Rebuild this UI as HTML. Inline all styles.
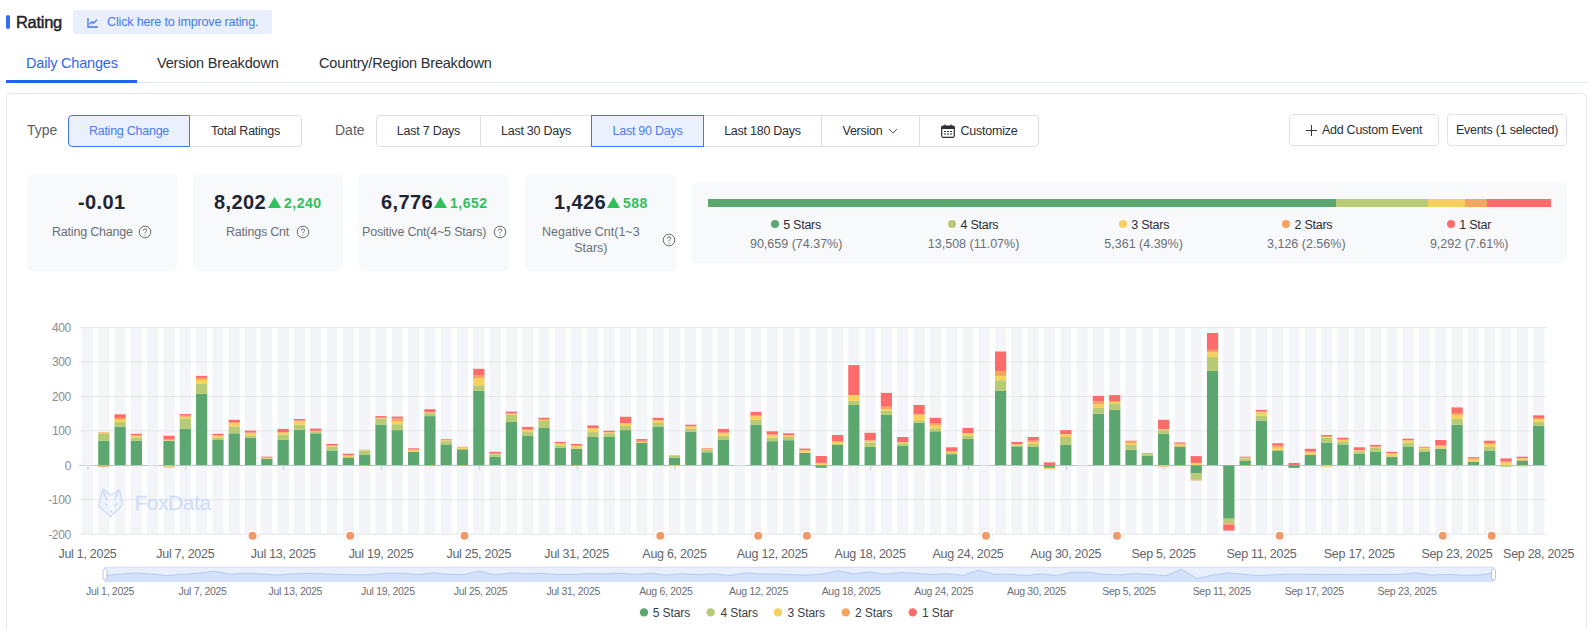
<!DOCTYPE html>
<html><head><meta charset="utf-8">
<style>
*{box-sizing:border-box;margin:0;padding:0}
html,body{width:1590px;height:629px;overflow:hidden;background:#fff;font-family:"Liberation Sans",sans-serif;color:#333}
.a{position:absolute;white-space:nowrap}
.btn{position:absolute;border:1px solid #dcdfe6;background:#fff;font-size:12.5px;letter-spacing:-0.25px;color:#2b2f36;display:flex;align-items:center;justify-content:center}
.hi{position:absolute}
.card{position:absolute;background:#f8f9fb;border-radius:4px}
.yl{letter-spacing:-0.3px;font-size:12px;fill:#8a8d93;font-family:"Liberation Sans",sans-serif}
.xl{letter-spacing:-0.28px;font-size:12.5px;fill:#62656b;font-family:"Liberation Sans",sans-serif}
.sl{letter-spacing:-0.3px;font-size:10.5px;fill:#6b6e74;font-family:"Liberation Sans",sans-serif}
.lg{letter-spacing:-0.1px;font-size:12px;fill:#3b3e44;font-family:"Liberation Sans",sans-serif}
</style></head><body>
<div class="a" style="left:6px;top:15px;width:4px;height:14px;border-radius:2px;background:#2f6df3"></div>
<div class="a" style="left:16px;top:12px;font-size:16.5px;font-weight:normal;-webkit-text-stroke:0.45px #1f2329;color:#1f2329;line-height:20px;letter-spacing:-0.3px">Rating</div>
<div class="a" style="left:73px;top:10px;width:199px;height:24px;background:#e9effd;border-radius:2px"></div>
<svg class="a" style="left:87px;top:17px" width="12" height="11" viewBox="0 0 12 11"><path d="M1 1 V10 H11" fill="none" stroke="#3f74ef" stroke-width="1.3"/><path d="M2.7 7.3 L5 4.9 L6.6 6.2 L10 2.7" fill="none" stroke="#3f74ef" stroke-width="1.3"/></svg>
<div class="a" style="left:107px;top:14px;font-size:12.5px;color:#4677ee;line-height:16px;letter-spacing:-0.15px">Click here to improve rating.</div>
<div class="a" style="left:26px;top:54px;font-size:14.5px;color:#2e67ef;line-height:18px;letter-spacing:-0.2px">Daily Changes</div>
<div class="a" style="left:157px;top:54px;font-size:14.5px;color:#2b2f36;line-height:18px;letter-spacing:-0.2px">Version Breakdown</div>
<div class="a" style="left:319px;top:54px;font-size:14.5px;color:#2b2f36;line-height:18px;letter-spacing:-0.2px">Country/Region Breakdown</div>
<div class="a" style="left:6px;top:82px;width:1582px;height:1px;background:#e3e9f3"></div>
<div class="a" style="left:6px;top:80px;width:131px;height:2.5px;background:#1f63f0"></div>
<div class="a" style="left:6px;top:93px;width:1581px;height:600px;border:1px solid #e6e7ea;border-radius:5px"></div>
<div class="a" style="left:27px;top:122px;font-size:14px;color:#5b5f66;line-height:16px">Type</div>
<div class="btn" style="left:189px;top:115px;width:113px;height:32px;border-radius:0 4px 4px 0">Total Ratings</div>
<div class="btn" style="left:68px;top:115px;width:122px;height:32px;border-radius:4px 0 0 4px;border-color:#3b78f2;background:#eaf1fd;color:#4a7cf0">Rating Change</div>
<div class="a" style="left:335px;top:122px;font-size:14px;color:#5b5f66;line-height:16px">Date</div>
<div class="btn" style="left:376px;top:115px;width:105px;height:32px;border-radius:4px 0 0 4px">Last 7 Days</div>
<div class="btn" style="left:480px;top:115px;width:112px;height:32px">Last 30 Days</div>
<div class="btn" style="left:703px;top:115px;width:119px;height:32px">Last 180 Days</div>
<div class="btn" style="left:821px;top:115px;width:99px;height:32px">Version <svg width="10" height="6" viewBox="0 0 10 6" style="margin-left:6px"><path d="M1 1 L5 5 L9 1" fill="none" stroke="#555" stroke-width="1"/></svg></div>
<div class="btn" style="left:919px;top:115px;width:120px;height:32px;border-radius:0 4px 4px 0"><svg width="14" height="14" viewBox="0 0 14 14" style="margin-right:6px"><rect x="0.7" y="2" width="12.6" height="11.3" rx="1.5" fill="none" stroke="#2b2f36" stroke-width="1.2"/><rect x="0.7" y="2" width="12.6" height="3" fill="#2b2f36"/><path d="M4 0.5 V3 M10 0.5 V3" stroke="#2b2f36" stroke-width="1.2"/><path d="M3 7.5 H5 M6 7.5 H8 M9 7.5 H11 M3 10 H5 M6 10 H8 M9 10 H11" stroke="#2b2f36" stroke-width="1.1"/></svg>Customize</div>
<div class="btn" style="left:591px;top:115px;width:113px;height:32px;border-color:#3b78f2;background:#eaf1fd;color:#4a7cf0">Last 90 Days</div>
<div class="btn" style="left:1289px;top:114px;width:150px;height:32px;border-radius:4px;border-color:#e0e2e7"><svg width="11" height="11" viewBox="0 0 11 11" style="margin-right:5px;position:relative;top:0.5px"><path d="M5.5 0 V11 M0 5.5 H11" stroke="#33363c" stroke-width="1"/></svg>Add Custom Event</div>
<div class="btn" style="left:1447px;top:114px;width:120px;height:32px;border-radius:4px;border-color:#e0e2e7">Events (1 selected)</div>

<div class="card" style="left:27px;top:175px;width:150px;height:96px"></div>
<div class="card" style="left:193px;top:175px;width:150px;height:96px"></div>
<div class="card" style="left:359px;top:175px;width:150px;height:96px"></div>
<div class="card" style="left:525px;top:175px;width:151px;height:96px"></div>
<div class="card" style="left:692px;top:183px;width:875px;height:80px"></div>

<div class="a" style="left:78px;top:190px;font-size:20px;font-weight:bold;color:#1f2533;line-height:24px;letter-spacing:0.4px">-0.01</div>
<div class="a" style="left:52px;top:225px;font-size:12.5px;color:#6b6f76;line-height:15px;letter-spacing:-0.2px">Rating Change</div>
<svg class="hi" style="left:138.2px;top:224.9px" width="14" height="14" viewBox="0 0 14 14"><circle cx="7" cy="7" r="5.8" fill="none" stroke="#6b6f76" stroke-width="1"/><path d="M5.3 5.6 Q5.3 3.9 7 3.9 Q8.7 3.9 8.7 5.4 Q8.7 6.3 7.6 6.9 Q7 7.2 7 8.2" fill="none" stroke="#6b6f76" stroke-width="1"/><circle cx="7" cy="10" r="0.6" fill="#6b6f76"/></svg>
<div class="a" style="left:214px;top:190px;font-size:20px;font-weight:bold;color:#1f2533;line-height:24px;letter-spacing:0.4px">8,202</div>
<svg class="a" style="left:268px;top:197px" width="13" height="11" viewBox="0 0 13 11"><path d="M6.5 0 L13 11 H0 Z" fill="#30c25a"/></svg>
<div class="a" style="left:284px;top:194px;font-size:14px;font-weight:bold;color:#30c25a;line-height:18px;letter-spacing:0.5px">2,240</div>
<div class="a" style="left:226px;top:225px;font-size:12.5px;color:#6b6f76;line-height:15px;letter-spacing:-0.2px">Ratings Cnt</div>
<svg class="hi" style="left:295.7px;top:224.9px" width="14" height="14" viewBox="0 0 14 14"><circle cx="7" cy="7" r="5.8" fill="none" stroke="#6b6f76" stroke-width="1"/><path d="M5.3 5.6 Q5.3 3.9 7 3.9 Q8.7 3.9 8.7 5.4 Q8.7 6.3 7.6 6.9 Q7 7.2 7 8.2" fill="none" stroke="#6b6f76" stroke-width="1"/><circle cx="7" cy="10" r="0.6" fill="#6b6f76"/></svg>
<div class="a" style="left:381px;top:190px;font-size:20px;font-weight:bold;color:#1f2533;line-height:24px;letter-spacing:0.4px">6,776</div>
<svg class="a" style="left:434px;top:197px" width="13" height="11" viewBox="0 0 13 11"><path d="M6.5 0 L13 11 H0 Z" fill="#30c25a"/></svg>
<div class="a" style="left:450px;top:194px;font-size:14px;font-weight:bold;color:#30c25a;line-height:18px;letter-spacing:0.5px">1,652</div>
<div class="a" style="left:362px;top:225px;font-size:12.5px;color:#6b6f76;line-height:15px;letter-spacing:-0.2px">Positive Cnt(4~5 Stars)</div>
<svg class="hi" style="left:492.5px;top:224.9px" width="14" height="14" viewBox="0 0 14 14"><circle cx="7" cy="7" r="5.8" fill="none" stroke="#6b6f76" stroke-width="1"/><path d="M5.3 5.6 Q5.3 3.9 7 3.9 Q8.7 3.9 8.7 5.4 Q8.7 6.3 7.6 6.9 Q7 7.2 7 8.2" fill="none" stroke="#6b6f76" stroke-width="1"/><circle cx="7" cy="10" r="0.6" fill="#6b6f76"/></svg>
<div class="a" style="left:554px;top:190px;font-size:20px;font-weight:bold;color:#1f2533;line-height:24px;letter-spacing:0.4px">1,426</div>
<svg class="a" style="left:607px;top:197px" width="13" height="11" viewBox="0 0 13 11"><path d="M6.5 0 L13 11 H0 Z" fill="#30c25a"/></svg>
<div class="a" style="left:623px;top:194px;font-size:14px;font-weight:bold;color:#30c25a;line-height:18px;letter-spacing:0.5px">588</div>
<div class="a" style="left:542px;top:225px;font-size:12.5px;color:#6b6f76;line-height:15.8px;text-align:center">Negative Cnt(1~3<br>Stars)</div>
<svg class="hi" style="left:661.9px;top:232.9px" width="14" height="14" viewBox="0 0 14 14"><circle cx="7" cy="7" r="5.8" fill="none" stroke="#6b6f76" stroke-width="1"/><path d="M5.3 5.6 Q5.3 3.9 7 3.9 Q8.7 3.9 8.7 5.4 Q8.7 6.3 7.6 6.9 Q7 7.2 7 8.2" fill="none" stroke="#6b6f76" stroke-width="1"/><circle cx="7" cy="10" r="0.6" fill="#6b6f76"/></svg>

<div class="a" style="left:708px;top:199px;width:627.5px;height:8px;background:#5ba76f"></div>
<div class="a" style="left:1335.5px;top:199px;width:92.6px;height:8px;background:#b6cb73"></div>
<div class="a" style="left:1428.1px;top:199px;width:37.2px;height:8px;background:#f8d05c"></div>
<div class="a" style="left:1465.3px;top:199px;width:21.8px;height:8px;background:#f6a55f"></div>
<div class="a" style="left:1487.1px;top:199px;width:64.1px;height:8px;background:#fd6b6b"></div>
<div class="a" style="left:770.7px;top:220px;width:8px;height:8px;border-radius:50%;background:#5ba76f"></div>
<div class="a" style="left:783.2px;top:217.5px;font-size:12.5px;color:#2b2f36;line-height:15px;letter-spacing:-0.25px">5 Stars</div>
<div class="a" style="left:736.2px;width:120px;text-align:center;top:237px;font-size:12.5px;color:#6b6f76;line-height:15px">90,659 (74.37%)</div>
<div class="a" style="left:948.0px;top:220px;width:8px;height:8px;border-radius:50%;background:#b6cb73"></div>
<div class="a" style="left:960.5px;top:217.5px;font-size:12.5px;color:#2b2f36;line-height:15px;letter-spacing:-0.25px">4 Stars</div>
<div class="a" style="left:913.6px;width:120px;text-align:center;top:237px;font-size:12.5px;color:#6b6f76;line-height:15px">13,508 (11.07%)</div>
<div class="a" style="left:1118.8px;top:220px;width:8px;height:8px;border-radius:50%;background:#f8d05c"></div>
<div class="a" style="left:1131.3px;top:217.5px;font-size:12.5px;color:#2b2f36;line-height:15px;letter-spacing:-0.25px">3 Stars</div>
<div class="a" style="left:1083.6px;width:120px;text-align:center;top:237px;font-size:12.5px;color:#6b6f76;line-height:15px">5,361 (4.39%)</div>
<div class="a" style="left:1282.0px;top:220px;width:8px;height:8px;border-radius:50%;background:#f6a55f"></div>
<div class="a" style="left:1294.5px;top:217.5px;font-size:12.5px;color:#2b2f36;line-height:15px;letter-spacing:-0.25px">2 Stars</div>
<div class="a" style="left:1246.3px;width:120px;text-align:center;top:237px;font-size:12.5px;color:#6b6f76;line-height:15px">3,126 (2.56%)</div>
<div class="a" style="left:1446.8px;top:220px;width:8px;height:8px;border-radius:50%;background:#fd6b6b"></div>
<div class="a" style="left:1459.3px;top:217.5px;font-size:12.5px;color:#2b2f36;line-height:15px;letter-spacing:-0.25px">1 Star</div>
<div class="a" style="left:1409.2px;width:120px;text-align:center;top:237px;font-size:12.5px;color:#6b6f76;line-height:15px">9,292 (7.61%)</div>

<svg class="a" style="left:0;top:0" width="1590" height="629" viewBox="0 0 1590 629">
<defs><filter id="sh" x="-50%" y="-50%" width="200%" height="200%"><feDropShadow dx="0" dy="0" stdDeviation="1" flood-color="#000" flood-opacity="0.15"/></filter></defs>
<line x1="79.3" y1="465.5" x2="1546.8" y2="465.5" stroke="#b6bfcb" stroke-width="1"/>
<rect x="81.90" y="327.5" width="11.2" height="206.7" fill="#edeef3" fill-opacity="0.6"/>
<rect x="98.21" y="327.5" width="11.2" height="206.7" fill="#edeef3" fill-opacity="0.6"/>
<rect x="114.51" y="327.5" width="11.2" height="206.7" fill="#edeef3" fill-opacity="0.6"/>
<rect x="130.81" y="327.5" width="11.2" height="206.7" fill="#edeef3" fill-opacity="0.6"/>
<rect x="147.12" y="327.5" width="11.2" height="206.7" fill="#edeef3" fill-opacity="0.6"/>
<rect x="163.43" y="327.5" width="11.2" height="206.7" fill="#edeef3" fill-opacity="0.6"/>
<rect x="179.73" y="327.5" width="11.2" height="206.7" fill="#edeef3" fill-opacity="0.6"/>
<rect x="196.03" y="327.5" width="11.2" height="206.7" fill="#edeef3" fill-opacity="0.6"/>
<rect x="212.34" y="327.5" width="11.2" height="206.7" fill="#edeef3" fill-opacity="0.6"/>
<rect x="228.65" y="327.5" width="11.2" height="206.7" fill="#edeef3" fill-opacity="0.6"/>
<rect x="244.95" y="327.5" width="11.2" height="206.7" fill="#edeef3" fill-opacity="0.6"/>
<rect x="261.25" y="327.5" width="11.2" height="206.7" fill="#edeef3" fill-opacity="0.6"/>
<rect x="277.56" y="327.5" width="11.2" height="206.7" fill="#edeef3" fill-opacity="0.6"/>
<rect x="293.87" y="327.5" width="11.2" height="206.7" fill="#edeef3" fill-opacity="0.6"/>
<rect x="310.17" y="327.5" width="11.2" height="206.7" fill="#edeef3" fill-opacity="0.6"/>
<rect x="326.47" y="327.5" width="11.2" height="206.7" fill="#edeef3" fill-opacity="0.6"/>
<rect x="342.78" y="327.5" width="11.2" height="206.7" fill="#edeef3" fill-opacity="0.6"/>
<rect x="359.08" y="327.5" width="11.2" height="206.7" fill="#edeef3" fill-opacity="0.6"/>
<rect x="375.39" y="327.5" width="11.2" height="206.7" fill="#edeef3" fill-opacity="0.6"/>
<rect x="391.69" y="327.5" width="11.2" height="206.7" fill="#edeef3" fill-opacity="0.6"/>
<rect x="408.00" y="327.5" width="11.2" height="206.7" fill="#edeef3" fill-opacity="0.6"/>
<rect x="424.30" y="327.5" width="11.2" height="206.7" fill="#edeef3" fill-opacity="0.6"/>
<rect x="440.61" y="327.5" width="11.2" height="206.7" fill="#edeef3" fill-opacity="0.6"/>
<rect x="456.91" y="327.5" width="11.2" height="206.7" fill="#edeef3" fill-opacity="0.6"/>
<rect x="473.22" y="327.5" width="11.2" height="206.7" fill="#edeef3" fill-opacity="0.6"/>
<rect x="489.52" y="327.5" width="11.2" height="206.7" fill="#edeef3" fill-opacity="0.6"/>
<rect x="505.83" y="327.5" width="11.2" height="206.7" fill="#edeef3" fill-opacity="0.6"/>
<rect x="522.13" y="327.5" width="11.2" height="206.7" fill="#edeef3" fill-opacity="0.6"/>
<rect x="538.44" y="327.5" width="11.2" height="206.7" fill="#edeef3" fill-opacity="0.6"/>
<rect x="554.75" y="327.5" width="11.2" height="206.7" fill="#edeef3" fill-opacity="0.6"/>
<rect x="571.05" y="327.5" width="11.2" height="206.7" fill="#edeef3" fill-opacity="0.6"/>
<rect x="587.35" y="327.5" width="11.2" height="206.7" fill="#edeef3" fill-opacity="0.6"/>
<rect x="603.66" y="327.5" width="11.2" height="206.7" fill="#edeef3" fill-opacity="0.6"/>
<rect x="619.96" y="327.5" width="11.2" height="206.7" fill="#edeef3" fill-opacity="0.6"/>
<rect x="636.27" y="327.5" width="11.2" height="206.7" fill="#edeef3" fill-opacity="0.6"/>
<rect x="652.57" y="327.5" width="11.2" height="206.7" fill="#edeef3" fill-opacity="0.6"/>
<rect x="668.88" y="327.5" width="11.2" height="206.7" fill="#edeef3" fill-opacity="0.6"/>
<rect x="685.18" y="327.5" width="11.2" height="206.7" fill="#edeef3" fill-opacity="0.6"/>
<rect x="701.49" y="327.5" width="11.2" height="206.7" fill="#edeef3" fill-opacity="0.6"/>
<rect x="717.79" y="327.5" width="11.2" height="206.7" fill="#edeef3" fill-opacity="0.6"/>
<rect x="734.10" y="327.5" width="11.2" height="206.7" fill="#edeef3" fill-opacity="0.6"/>
<rect x="750.40" y="327.5" width="11.2" height="206.7" fill="#edeef3" fill-opacity="0.6"/>
<rect x="766.71" y="327.5" width="11.2" height="206.7" fill="#edeef3" fill-opacity="0.6"/>
<rect x="783.01" y="327.5" width="11.2" height="206.7" fill="#edeef3" fill-opacity="0.6"/>
<rect x="799.32" y="327.5" width="11.2" height="206.7" fill="#edeef3" fill-opacity="0.6"/>
<rect x="815.62" y="327.5" width="11.2" height="206.7" fill="#edeef3" fill-opacity="0.6"/>
<rect x="831.93" y="327.5" width="11.2" height="206.7" fill="#edeef3" fill-opacity="0.6"/>
<rect x="848.24" y="327.5" width="11.2" height="206.7" fill="#edeef3" fill-opacity="0.6"/>
<rect x="864.54" y="327.5" width="11.2" height="206.7" fill="#edeef3" fill-opacity="0.6"/>
<rect x="880.84" y="327.5" width="11.2" height="206.7" fill="#edeef3" fill-opacity="0.6"/>
<rect x="897.15" y="327.5" width="11.2" height="206.7" fill="#edeef3" fill-opacity="0.6"/>
<rect x="913.45" y="327.5" width="11.2" height="206.7" fill="#edeef3" fill-opacity="0.6"/>
<rect x="929.76" y="327.5" width="11.2" height="206.7" fill="#edeef3" fill-opacity="0.6"/>
<rect x="946.06" y="327.5" width="11.2" height="206.7" fill="#edeef3" fill-opacity="0.6"/>
<rect x="962.37" y="327.5" width="11.2" height="206.7" fill="#edeef3" fill-opacity="0.6"/>
<rect x="978.67" y="327.5" width="11.2" height="206.7" fill="#edeef3" fill-opacity="0.6"/>
<rect x="994.98" y="327.5" width="11.2" height="206.7" fill="#edeef3" fill-opacity="0.6"/>
<rect x="1011.28" y="327.5" width="11.2" height="206.7" fill="#edeef3" fill-opacity="0.6"/>
<rect x="1027.59" y="327.5" width="11.2" height="206.7" fill="#edeef3" fill-opacity="0.6"/>
<rect x="1043.89" y="327.5" width="11.2" height="206.7" fill="#edeef3" fill-opacity="0.6"/>
<rect x="1060.20" y="327.5" width="11.2" height="206.7" fill="#edeef3" fill-opacity="0.6"/>
<rect x="1076.51" y="327.5" width="11.2" height="206.7" fill="#edeef3" fill-opacity="0.6"/>
<rect x="1092.81" y="327.5" width="11.2" height="206.7" fill="#edeef3" fill-opacity="0.6"/>
<rect x="1109.12" y="327.5" width="11.2" height="206.7" fill="#edeef3" fill-opacity="0.6"/>
<rect x="1125.42" y="327.5" width="11.2" height="206.7" fill="#edeef3" fill-opacity="0.6"/>
<rect x="1141.73" y="327.5" width="11.2" height="206.7" fill="#edeef3" fill-opacity="0.6"/>
<rect x="1158.03" y="327.5" width="11.2" height="206.7" fill="#edeef3" fill-opacity="0.6"/>
<rect x="1174.34" y="327.5" width="11.2" height="206.7" fill="#edeef3" fill-opacity="0.6"/>
<rect x="1190.64" y="327.5" width="11.2" height="206.7" fill="#edeef3" fill-opacity="0.6"/>
<rect x="1206.95" y="327.5" width="11.2" height="206.7" fill="#edeef3" fill-opacity="0.6"/>
<rect x="1223.25" y="327.5" width="11.2" height="206.7" fill="#edeef3" fill-opacity="0.6"/>
<rect x="1239.56" y="327.5" width="11.2" height="206.7" fill="#edeef3" fill-opacity="0.6"/>
<rect x="1255.86" y="327.5" width="11.2" height="206.7" fill="#edeef3" fill-opacity="0.6"/>
<rect x="1272.16" y="327.5" width="11.2" height="206.7" fill="#edeef3" fill-opacity="0.6"/>
<rect x="1288.47" y="327.5" width="11.2" height="206.7" fill="#edeef3" fill-opacity="0.6"/>
<rect x="1304.78" y="327.5" width="11.2" height="206.7" fill="#edeef3" fill-opacity="0.6"/>
<rect x="1321.08" y="327.5" width="11.2" height="206.7" fill="#edeef3" fill-opacity="0.6"/>
<rect x="1337.38" y="327.5" width="11.2" height="206.7" fill="#edeef3" fill-opacity="0.6"/>
<rect x="1353.69" y="327.5" width="11.2" height="206.7" fill="#edeef3" fill-opacity="0.6"/>
<rect x="1370.00" y="327.5" width="11.2" height="206.7" fill="#edeef3" fill-opacity="0.6"/>
<rect x="1386.30" y="327.5" width="11.2" height="206.7" fill="#edeef3" fill-opacity="0.6"/>
<rect x="1402.61" y="327.5" width="11.2" height="206.7" fill="#edeef3" fill-opacity="0.6"/>
<rect x="1418.91" y="327.5" width="11.2" height="206.7" fill="#edeef3" fill-opacity="0.6"/>
<rect x="1435.22" y="327.5" width="11.2" height="206.7" fill="#edeef3" fill-opacity="0.6"/>
<rect x="1451.52" y="327.5" width="11.2" height="206.7" fill="#edeef3" fill-opacity="0.6"/>
<rect x="1467.83" y="327.5" width="11.2" height="206.7" fill="#edeef3" fill-opacity="0.6"/>
<rect x="1484.13" y="327.5" width="11.2" height="206.7" fill="#edeef3" fill-opacity="0.6"/>
<rect x="1500.44" y="327.5" width="11.2" height="206.7" fill="#edeef3" fill-opacity="0.6"/>
<rect x="1516.74" y="327.5" width="11.2" height="206.7" fill="#edeef3" fill-opacity="0.6"/>
<rect x="1533.05" y="327.5" width="11.2" height="206.7" fill="#edeef3" fill-opacity="0.6"/>
<line x1="79.3" y1="327.5" x2="1546.8" y2="327.5" stroke="#e5e7eb" stroke-width="1"/>
<line x1="79.3" y1="362.0" x2="1546.8" y2="362.0" stroke="#e5e7eb" stroke-width="1"/>
<line x1="79.3" y1="396.5" x2="1546.8" y2="396.5" stroke="#e5e7eb" stroke-width="1"/>
<line x1="79.3" y1="430.9" x2="1546.8" y2="430.9" stroke="#e5e7eb" stroke-width="1"/>
<line x1="79.3" y1="499.7" x2="1546.8" y2="499.7" stroke="#e5e7eb" stroke-width="1"/>
<line x1="79.3" y1="534.2" x2="1546.8" y2="534.2" stroke="#e5e7eb" stroke-width="1"/>
<rect x="98.21" y="440.70" width="11.2" height="24.60" fill="#5ba76f"/>
<rect x="98.21" y="433.30" width="11.2" height="7.40" fill="#b6cb73"/>
<rect x="98.21" y="432.50" width="11.2" height="0.80" fill="#f8d05c"/>
<rect x="98.21" y="432.00" width="11.2" height="0.50" fill="#f6a55f"/>
<rect x="98.21" y="465.30" width="11.2" height="1.50" fill="#f6a55f"/>
<rect x="114.51" y="426.60" width="11.2" height="38.70" fill="#5ba76f"/>
<rect x="114.51" y="421.70" width="11.2" height="4.90" fill="#b6cb73"/>
<rect x="114.51" y="419.80" width="11.2" height="1.90" fill="#f8d05c"/>
<rect x="114.51" y="418.00" width="11.2" height="1.80" fill="#f6a55f"/>
<rect x="114.51" y="414.30" width="11.2" height="3.70" fill="#fd6b6b"/>
<rect x="130.81" y="440.70" width="11.2" height="24.60" fill="#5ba76f"/>
<rect x="130.81" y="437.70" width="11.2" height="3.00" fill="#b6cb73"/>
<rect x="130.81" y="435.80" width="11.2" height="1.90" fill="#f8d05c"/>
<rect x="130.81" y="435.00" width="11.2" height="0.80" fill="#f6a55f"/>
<rect x="130.81" y="433.80" width="11.2" height="1.20" fill="#fd6b6b"/>
<rect x="163.43" y="440.70" width="11.2" height="24.60" fill="#5ba76f"/>
<rect x="163.43" y="440.00" width="11.2" height="0.70" fill="#f8d05c"/>
<rect x="163.43" y="439.00" width="11.2" height="1.00" fill="#f6a55f"/>
<rect x="163.43" y="435.80" width="11.2" height="3.20" fill="#fd6b6b"/>
<rect x="163.43" y="465.30" width="11.2" height="1.20" fill="#b6cb73"/>
<rect x="163.43" y="466.50" width="11.2" height="1.30" fill="#f8d05c"/>
<rect x="179.73" y="428.60" width="11.2" height="36.70" fill="#5ba76f"/>
<rect x="179.73" y="418.50" width="11.2" height="10.10" fill="#b6cb73"/>
<rect x="179.73" y="416.80" width="11.2" height="1.70" fill="#f8d05c"/>
<rect x="179.73" y="415.60" width="11.2" height="1.20" fill="#f6a55f"/>
<rect x="179.73" y="414.10" width="11.2" height="1.50" fill="#fd6b6b"/>
<rect x="196.03" y="393.90" width="11.2" height="71.40" fill="#5ba76f"/>
<rect x="196.03" y="383.50" width="11.2" height="10.40" fill="#b6cb73"/>
<rect x="196.03" y="379.90" width="11.2" height="3.60" fill="#f8d05c"/>
<rect x="196.03" y="377.90" width="11.2" height="2.00" fill="#f6a55f"/>
<rect x="196.03" y="375.90" width="11.2" height="2.00" fill="#fd6b6b"/>
<rect x="212.34" y="440.00" width="11.2" height="25.30" fill="#5ba76f"/>
<rect x="212.34" y="437.70" width="11.2" height="2.30" fill="#b6cb73"/>
<rect x="212.34" y="435.80" width="11.2" height="1.90" fill="#f8d05c"/>
<rect x="212.34" y="435.00" width="11.2" height="0.80" fill="#f6a55f"/>
<rect x="212.34" y="433.80" width="11.2" height="1.20" fill="#fd6b6b"/>
<rect x="228.65" y="433.30" width="11.2" height="32.00" fill="#5ba76f"/>
<rect x="228.65" y="426.60" width="11.2" height="6.70" fill="#b6cb73"/>
<rect x="228.65" y="423.40" width="11.2" height="3.20" fill="#f8d05c"/>
<rect x="228.65" y="422.00" width="11.2" height="1.40" fill="#f6a55f"/>
<rect x="228.65" y="419.80" width="11.2" height="2.20" fill="#fd6b6b"/>
<rect x="244.95" y="437.70" width="11.2" height="27.60" fill="#5ba76f"/>
<rect x="244.95" y="435.80" width="11.2" height="1.90" fill="#b6cb73"/>
<rect x="244.95" y="433.30" width="11.2" height="2.50" fill="#f8d05c"/>
<rect x="244.95" y="432.50" width="11.2" height="0.80" fill="#f6a55f"/>
<rect x="244.95" y="430.60" width="11.2" height="1.90" fill="#fd6b6b"/>
<rect x="261.25" y="458.70" width="11.2" height="6.60" fill="#5ba76f"/>
<rect x="261.25" y="458.00" width="11.2" height="0.70" fill="#f8d05c"/>
<rect x="261.25" y="457.50" width="11.2" height="0.50" fill="#f6a55f"/>
<rect x="261.25" y="456.70" width="11.2" height="0.80" fill="#fd6b6b"/>
<rect x="277.56" y="440.00" width="11.2" height="25.30" fill="#5ba76f"/>
<rect x="277.56" y="434.50" width="11.2" height="5.50" fill="#b6cb73"/>
<rect x="277.56" y="432.80" width="11.2" height="1.70" fill="#f8d05c"/>
<rect x="277.56" y="432.00" width="11.2" height="0.80" fill="#f6a55f"/>
<rect x="277.56" y="428.90" width="11.2" height="3.10" fill="#fd6b6b"/>
<rect x="293.87" y="429.60" width="11.2" height="35.70" fill="#5ba76f"/>
<rect x="293.87" y="424.70" width="11.2" height="4.90" fill="#b6cb73"/>
<rect x="293.87" y="421.00" width="11.2" height="3.70" fill="#f8d05c"/>
<rect x="293.87" y="420.50" width="11.2" height="0.50" fill="#f6a55f"/>
<rect x="293.87" y="419.00" width="11.2" height="1.50" fill="#fd6b6b"/>
<rect x="310.17" y="433.30" width="11.2" height="32.00" fill="#5ba76f"/>
<rect x="310.17" y="432.10" width="11.2" height="1.20" fill="#b6cb73"/>
<rect x="310.17" y="431.50" width="11.2" height="0.60" fill="#f8d05c"/>
<rect x="310.17" y="430.80" width="11.2" height="0.70" fill="#f6a55f"/>
<rect x="310.17" y="428.60" width="11.2" height="2.20" fill="#fd6b6b"/>
<rect x="326.47" y="450.50" width="11.2" height="14.80" fill="#5ba76f"/>
<rect x="326.47" y="446.80" width="11.2" height="3.70" fill="#b6cb73"/>
<rect x="326.47" y="446.00" width="11.2" height="0.80" fill="#f8d05c"/>
<rect x="326.47" y="445.50" width="11.2" height="0.50" fill="#f6a55f"/>
<rect x="326.47" y="443.90" width="11.2" height="1.60" fill="#fd6b6b"/>
<rect x="342.78" y="457.40" width="11.2" height="7.90" fill="#5ba76f"/>
<rect x="342.78" y="455.50" width="11.2" height="1.90" fill="#f8d05c"/>
<rect x="342.78" y="455.00" width="11.2" height="0.50" fill="#f6a55f"/>
<rect x="342.78" y="453.70" width="11.2" height="1.30" fill="#fd6b6b"/>
<rect x="359.08" y="454.50" width="11.2" height="10.80" fill="#5ba76f"/>
<rect x="359.08" y="450.50" width="11.2" height="4.00" fill="#b6cb73"/>
<rect x="359.08" y="450.00" width="11.2" height="0.50" fill="#f8d05c"/>
<rect x="359.08" y="449.80" width="11.2" height="0.20" fill="#fd6b6b"/>
<rect x="359.08" y="465.30" width="11.2" height="0.70" fill="#f6a55f"/>
<rect x="375.39" y="424.70" width="11.2" height="40.60" fill="#5ba76f"/>
<rect x="375.39" y="418.50" width="11.2" height="6.20" fill="#b6cb73"/>
<rect x="375.39" y="418.00" width="11.2" height="0.50" fill="#f8d05c"/>
<rect x="375.39" y="417.80" width="11.2" height="0.20" fill="#f6a55f"/>
<rect x="375.39" y="416.10" width="11.2" height="1.70" fill="#fd6b6b"/>
<rect x="391.69" y="430.10" width="11.2" height="35.20" fill="#5ba76f"/>
<rect x="391.69" y="424.20" width="11.2" height="5.90" fill="#b6cb73"/>
<rect x="391.69" y="421.50" width="11.2" height="2.70" fill="#f8d05c"/>
<rect x="391.69" y="418.50" width="11.2" height="3.00" fill="#f6a55f"/>
<rect x="391.69" y="416.60" width="11.2" height="1.90" fill="#fd6b6b"/>
<rect x="408.00" y="451.80" width="11.2" height="13.50" fill="#5ba76f"/>
<rect x="408.00" y="450.00" width="11.2" height="1.80" fill="#f8d05c"/>
<rect x="408.00" y="449.50" width="11.2" height="0.50" fill="#f6a55f"/>
<rect x="408.00" y="448.30" width="11.2" height="1.20" fill="#fd6b6b"/>
<rect x="424.30" y="416.10" width="11.2" height="49.20" fill="#5ba76f"/>
<rect x="424.30" y="413.10" width="11.2" height="3.00" fill="#b6cb73"/>
<rect x="424.30" y="412.50" width="11.2" height="0.60" fill="#f8d05c"/>
<rect x="424.30" y="412.00" width="11.2" height="0.50" fill="#f6a55f"/>
<rect x="424.30" y="409.20" width="11.2" height="2.80" fill="#fd6b6b"/>
<rect x="424.30" y="465.30" width="11.2" height="0.70" fill="#f6a55f"/>
<rect x="440.61" y="444.40" width="11.2" height="20.90" fill="#5ba76f"/>
<rect x="440.61" y="441.20" width="11.2" height="3.20" fill="#b6cb73"/>
<rect x="440.61" y="440.50" width="11.2" height="0.70" fill="#f8d05c"/>
<rect x="440.61" y="439.50" width="11.2" height="1.00" fill="#f6a55f"/>
<rect x="440.61" y="439.00" width="11.2" height="0.50" fill="#fd6b6b"/>
<rect x="456.91" y="449.30" width="11.2" height="16.00" fill="#5ba76f"/>
<rect x="456.91" y="447.60" width="11.2" height="1.70" fill="#f8d05c"/>
<rect x="456.91" y="446.80" width="11.2" height="0.80" fill="#f6a55f"/>
<rect x="456.91" y="465.30" width="11.2" height="0.70" fill="#f6a55f"/>
<rect x="473.22" y="390.90" width="11.2" height="74.40" fill="#5ba76f"/>
<rect x="473.22" y="385.30" width="11.2" height="5.60" fill="#b6cb73"/>
<rect x="473.22" y="378.40" width="11.2" height="6.90" fill="#f8d05c"/>
<rect x="473.22" y="375.40" width="11.2" height="3.00" fill="#f6a55f"/>
<rect x="473.22" y="368.80" width="11.2" height="6.60" fill="#fd6b6b"/>
<rect x="489.52" y="456.70" width="11.2" height="8.60" fill="#5ba76f"/>
<rect x="489.52" y="454.20" width="11.2" height="2.50" fill="#b6cb73"/>
<rect x="489.52" y="454.00" width="11.2" height="0.20" fill="#f8d05c"/>
<rect x="489.52" y="453.50" width="11.2" height="0.50" fill="#f6a55f"/>
<rect x="489.52" y="451.80" width="11.2" height="1.70" fill="#fd6b6b"/>
<rect x="505.83" y="421.70" width="11.2" height="43.60" fill="#5ba76f"/>
<rect x="505.83" y="414.80" width="11.2" height="6.90" fill="#b6cb73"/>
<rect x="505.83" y="414.00" width="11.2" height="0.80" fill="#f8d05c"/>
<rect x="505.83" y="413.50" width="11.2" height="0.50" fill="#f6a55f"/>
<rect x="505.83" y="411.60" width="11.2" height="1.90" fill="#fd6b6b"/>
<rect x="522.13" y="435.80" width="11.2" height="29.50" fill="#5ba76f"/>
<rect x="522.13" y="432.10" width="11.2" height="3.70" fill="#b6cb73"/>
<rect x="522.13" y="430.30" width="11.2" height="1.80" fill="#f8d05c"/>
<rect x="522.13" y="429.50" width="11.2" height="0.80" fill="#f6a55f"/>
<rect x="522.13" y="426.90" width="11.2" height="2.60" fill="#fd6b6b"/>
<rect x="538.44" y="427.60" width="11.2" height="37.70" fill="#5ba76f"/>
<rect x="538.44" y="421.00" width="11.2" height="6.60" fill="#b6cb73"/>
<rect x="538.44" y="420.00" width="11.2" height="1.00" fill="#f8d05c"/>
<rect x="538.44" y="419.50" width="11.2" height="0.50" fill="#f6a55f"/>
<rect x="538.44" y="417.80" width="11.2" height="1.70" fill="#fd6b6b"/>
<rect x="554.75" y="447.60" width="11.2" height="17.70" fill="#5ba76f"/>
<rect x="554.75" y="446.00" width="11.2" height="1.60" fill="#b6cb73"/>
<rect x="554.75" y="443.60" width="11.2" height="2.40" fill="#f8d05c"/>
<rect x="554.75" y="443.00" width="11.2" height="0.60" fill="#f6a55f"/>
<rect x="554.75" y="441.90" width="11.2" height="1.10" fill="#fd6b6b"/>
<rect x="571.05" y="448.60" width="11.2" height="16.70" fill="#5ba76f"/>
<rect x="571.05" y="446.10" width="11.2" height="2.50" fill="#f8d05c"/>
<rect x="571.05" y="445.00" width="11.2" height="1.10" fill="#f6a55f"/>
<rect x="571.05" y="443.90" width="11.2" height="1.10" fill="#fd6b6b"/>
<rect x="571.05" y="465.30" width="11.2" height="0.70" fill="#f6a55f"/>
<rect x="587.35" y="437.00" width="11.2" height="28.30" fill="#5ba76f"/>
<rect x="587.35" y="432.10" width="11.2" height="4.90" fill="#b6cb73"/>
<rect x="587.35" y="428.40" width="11.2" height="3.70" fill="#f8d05c"/>
<rect x="587.35" y="428.00" width="11.2" height="0.40" fill="#f6a55f"/>
<rect x="587.35" y="425.40" width="11.2" height="2.60" fill="#fd6b6b"/>
<rect x="603.66" y="437.00" width="11.2" height="28.30" fill="#5ba76f"/>
<rect x="603.66" y="433.30" width="11.2" height="3.70" fill="#b6cb73"/>
<rect x="603.66" y="432.50" width="11.2" height="0.80" fill="#f8d05c"/>
<rect x="603.66" y="432.00" width="11.2" height="0.50" fill="#f6a55f"/>
<rect x="603.66" y="430.80" width="11.2" height="1.20" fill="#fd6b6b"/>
<rect x="619.96" y="430.10" width="11.2" height="35.20" fill="#5ba76f"/>
<rect x="619.96" y="425.90" width="11.2" height="4.20" fill="#b6cb73"/>
<rect x="619.96" y="423.40" width="11.2" height="2.50" fill="#f8d05c"/>
<rect x="619.96" y="423.00" width="11.2" height="0.40" fill="#f6a55f"/>
<rect x="619.96" y="416.80" width="11.2" height="6.20" fill="#fd6b6b"/>
<rect x="636.27" y="442.70" width="11.2" height="22.60" fill="#5ba76f"/>
<rect x="636.27" y="442.00" width="11.2" height="0.70" fill="#f8d05c"/>
<rect x="636.27" y="440.70" width="11.2" height="1.30" fill="#f6a55f"/>
<rect x="636.27" y="439.00" width="11.2" height="1.70" fill="#fd6b6b"/>
<rect x="652.57" y="426.60" width="11.2" height="38.70" fill="#5ba76f"/>
<rect x="652.57" y="423.00" width="11.2" height="3.60" fill="#b6cb73"/>
<rect x="652.57" y="420.50" width="11.2" height="2.50" fill="#f8d05c"/>
<rect x="652.57" y="420.00" width="11.2" height="0.50" fill="#f6a55f"/>
<rect x="652.57" y="417.80" width="11.2" height="2.20" fill="#fd6b6b"/>
<rect x="668.88" y="457.90" width="11.2" height="7.40" fill="#5ba76f"/>
<rect x="668.88" y="455.50" width="11.2" height="2.40" fill="#b6cb73"/>
<rect x="668.88" y="455.20" width="11.2" height="0.30" fill="#f8d05c"/>
<rect x="668.88" y="455.00" width="11.2" height="0.20" fill="#f6a55f"/>
<rect x="668.88" y="465.30" width="11.2" height="1.00" fill="#f8d05c"/>
<rect x="685.18" y="431.60" width="11.2" height="33.70" fill="#5ba76f"/>
<rect x="685.18" y="428.40" width="11.2" height="3.20" fill="#b6cb73"/>
<rect x="685.18" y="426.60" width="11.2" height="1.80" fill="#f8d05c"/>
<rect x="685.18" y="426.00" width="11.2" height="0.60" fill="#f6a55f"/>
<rect x="685.18" y="424.70" width="11.2" height="1.30" fill="#fd6b6b"/>
<rect x="701.49" y="452.30" width="11.2" height="13.00" fill="#5ba76f"/>
<rect x="701.49" y="450.00" width="11.2" height="2.30" fill="#b6cb73"/>
<rect x="701.49" y="449.50" width="11.2" height="0.50" fill="#f8d05c"/>
<rect x="701.49" y="448.50" width="11.2" height="1.00" fill="#f6a55f"/>
<rect x="701.49" y="448.10" width="11.2" height="0.40" fill="#fd6b6b"/>
<rect x="717.79" y="440.00" width="11.2" height="25.30" fill="#5ba76f"/>
<rect x="717.79" y="435.80" width="11.2" height="4.20" fill="#b6cb73"/>
<rect x="717.79" y="433.30" width="11.2" height="2.50" fill="#f8d05c"/>
<rect x="717.79" y="432.50" width="11.2" height="0.80" fill="#f6a55f"/>
<rect x="717.79" y="428.90" width="11.2" height="3.60" fill="#fd6b6b"/>
<rect x="750.40" y="424.70" width="11.2" height="40.60" fill="#5ba76f"/>
<rect x="750.40" y="419.80" width="11.2" height="4.90" fill="#b6cb73"/>
<rect x="750.40" y="416.10" width="11.2" height="3.70" fill="#f8d05c"/>
<rect x="750.40" y="415.50" width="11.2" height="0.60" fill="#f6a55f"/>
<rect x="750.40" y="411.90" width="11.2" height="3.60" fill="#fd6b6b"/>
<rect x="766.71" y="441.20" width="11.2" height="24.10" fill="#5ba76f"/>
<rect x="766.71" y="437.70" width="11.2" height="3.50" fill="#b6cb73"/>
<rect x="766.71" y="435.30" width="11.2" height="2.40" fill="#f8d05c"/>
<rect x="766.71" y="434.50" width="11.2" height="0.80" fill="#f6a55f"/>
<rect x="766.71" y="431.30" width="11.2" height="3.20" fill="#fd6b6b"/>
<rect x="783.01" y="440.20" width="11.2" height="25.10" fill="#5ba76f"/>
<rect x="783.01" y="437.00" width="11.2" height="3.20" fill="#b6cb73"/>
<rect x="783.01" y="435.50" width="11.2" height="1.50" fill="#f8d05c"/>
<rect x="783.01" y="435.00" width="11.2" height="0.50" fill="#f6a55f"/>
<rect x="783.01" y="433.30" width="11.2" height="1.70" fill="#fd6b6b"/>
<rect x="799.32" y="453.00" width="11.2" height="12.30" fill="#5ba76f"/>
<rect x="799.32" y="452.50" width="11.2" height="0.50" fill="#b6cb73"/>
<rect x="799.32" y="450.50" width="11.2" height="2.00" fill="#f8d05c"/>
<rect x="799.32" y="450.00" width="11.2" height="0.50" fill="#f6a55f"/>
<rect x="799.32" y="448.60" width="11.2" height="1.40" fill="#fd6b6b"/>
<rect x="815.62" y="463.50" width="11.2" height="1.80" fill="#f8d05c"/>
<rect x="815.62" y="462.90" width="11.2" height="0.60" fill="#f6a55f"/>
<rect x="815.62" y="456.00" width="11.2" height="6.90" fill="#fd6b6b"/>
<rect x="815.62" y="465.30" width="11.2" height="2.50" fill="#5ba76f"/>
<rect x="831.93" y="444.90" width="11.2" height="20.40" fill="#5ba76f"/>
<rect x="831.93" y="444.00" width="11.2" height="0.90" fill="#b6cb73"/>
<rect x="831.93" y="441.90" width="11.2" height="2.10" fill="#f8d05c"/>
<rect x="831.93" y="441.00" width="11.2" height="0.90" fill="#f6a55f"/>
<rect x="831.93" y="435.00" width="11.2" height="6.00" fill="#fd6b6b"/>
<rect x="848.24" y="405.00" width="11.2" height="60.30" fill="#5ba76f"/>
<rect x="848.24" y="400.80" width="11.2" height="4.20" fill="#b6cb73"/>
<rect x="848.24" y="395.10" width="11.2" height="5.70" fill="#f8d05c"/>
<rect x="848.24" y="395.00" width="11.2" height="0.10" fill="#f6a55f"/>
<rect x="848.24" y="365.10" width="11.2" height="29.90" fill="#fd6b6b"/>
<rect x="864.54" y="446.80" width="11.2" height="18.50" fill="#5ba76f"/>
<rect x="864.54" y="442.40" width="11.2" height="4.40" fill="#b6cb73"/>
<rect x="864.54" y="440.70" width="11.2" height="1.70" fill="#f8d05c"/>
<rect x="864.54" y="440.20" width="11.2" height="0.50" fill="#f6a55f"/>
<rect x="864.54" y="432.80" width="11.2" height="7.40" fill="#fd6b6b"/>
<rect x="880.84" y="414.80" width="11.2" height="50.50" fill="#5ba76f"/>
<rect x="880.84" y="410.60" width="11.2" height="4.20" fill="#b6cb73"/>
<rect x="880.84" y="409.00" width="11.2" height="1.60" fill="#f8d05c"/>
<rect x="880.84" y="406.70" width="11.2" height="2.30" fill="#f6a55f"/>
<rect x="880.84" y="392.90" width="11.2" height="13.80" fill="#fd6b6b"/>
<rect x="897.15" y="445.60" width="11.2" height="19.70" fill="#5ba76f"/>
<rect x="897.15" y="443.90" width="11.2" height="1.70" fill="#b6cb73"/>
<rect x="897.15" y="442.50" width="11.2" height="1.40" fill="#f8d05c"/>
<rect x="897.15" y="442.00" width="11.2" height="0.50" fill="#f6a55f"/>
<rect x="897.15" y="437.00" width="11.2" height="5.00" fill="#fd6b6b"/>
<rect x="913.45" y="422.70" width="11.2" height="42.60" fill="#5ba76f"/>
<rect x="913.45" y="421.00" width="11.2" height="1.70" fill="#b6cb73"/>
<rect x="913.45" y="414.80" width="11.2" height="6.20" fill="#f8d05c"/>
<rect x="913.45" y="414.00" width="11.2" height="0.80" fill="#f6a55f"/>
<rect x="913.45" y="405.00" width="11.2" height="9.00" fill="#fd6b6b"/>
<rect x="929.76" y="431.30" width="11.2" height="34.00" fill="#5ba76f"/>
<rect x="929.76" y="428.40" width="11.2" height="2.90" fill="#b6cb73"/>
<rect x="929.76" y="425.40" width="11.2" height="3.00" fill="#f8d05c"/>
<rect x="929.76" y="423.00" width="11.2" height="2.40" fill="#f6a55f"/>
<rect x="929.76" y="417.80" width="11.2" height="5.20" fill="#fd6b6b"/>
<rect x="946.06" y="454.20" width="11.2" height="11.10" fill="#5ba76f"/>
<rect x="946.06" y="453.00" width="11.2" height="1.20" fill="#b6cb73"/>
<rect x="946.06" y="451.80" width="11.2" height="1.20" fill="#f8d05c"/>
<rect x="946.06" y="451.00" width="11.2" height="0.80" fill="#f6a55f"/>
<rect x="946.06" y="447.30" width="11.2" height="3.70" fill="#fd6b6b"/>
<rect x="962.37" y="439.00" width="11.2" height="26.30" fill="#5ba76f"/>
<rect x="962.37" y="435.80" width="11.2" height="3.20" fill="#b6cb73"/>
<rect x="962.37" y="433.30" width="11.2" height="2.50" fill="#f8d05c"/>
<rect x="962.37" y="433.00" width="11.2" height="0.30" fill="#f6a55f"/>
<rect x="962.37" y="427.90" width="11.2" height="5.10" fill="#fd6b6b"/>
<rect x="994.98" y="390.90" width="11.2" height="74.40" fill="#5ba76f"/>
<rect x="994.98" y="380.30" width="11.2" height="10.60" fill="#b6cb73"/>
<rect x="994.98" y="375.90" width="11.2" height="4.40" fill="#f8d05c"/>
<rect x="994.98" y="371.00" width="11.2" height="4.90" fill="#f6a55f"/>
<rect x="994.98" y="351.50" width="11.2" height="19.50" fill="#fd6b6b"/>
<rect x="1011.28" y="446.40" width="11.2" height="18.90" fill="#5ba76f"/>
<rect x="1011.28" y="445.60" width="11.2" height="0.80" fill="#b6cb73"/>
<rect x="1011.28" y="444.40" width="11.2" height="1.20" fill="#f8d05c"/>
<rect x="1011.28" y="444.00" width="11.2" height="0.40" fill="#f6a55f"/>
<rect x="1011.28" y="441.90" width="11.2" height="2.10" fill="#fd6b6b"/>
<rect x="1027.59" y="446.80" width="11.2" height="18.50" fill="#5ba76f"/>
<rect x="1027.59" y="443.90" width="11.2" height="2.90" fill="#b6cb73"/>
<rect x="1027.59" y="441.90" width="11.2" height="2.00" fill="#f8d05c"/>
<rect x="1027.59" y="440.70" width="11.2" height="1.20" fill="#f6a55f"/>
<rect x="1027.59" y="437.00" width="11.2" height="3.70" fill="#fd6b6b"/>
<rect x="1043.89" y="462.40" width="11.2" height="2.90" fill="#fd6b6b"/>
<rect x="1043.89" y="465.30" width="11.2" height="2.50" fill="#5ba76f"/>
<rect x="1043.89" y="467.80" width="11.2" height="1.20" fill="#f8d05c"/>
<rect x="1060.20" y="444.90" width="11.2" height="20.40" fill="#5ba76f"/>
<rect x="1060.20" y="437.00" width="11.2" height="7.90" fill="#b6cb73"/>
<rect x="1060.20" y="434.50" width="11.2" height="2.50" fill="#f8d05c"/>
<rect x="1060.20" y="434.00" width="11.2" height="0.50" fill="#f6a55f"/>
<rect x="1060.20" y="430.10" width="11.2" height="3.90" fill="#fd6b6b"/>
<rect x="1092.81" y="413.60" width="11.2" height="51.70" fill="#5ba76f"/>
<rect x="1092.81" y="407.90" width="11.2" height="5.70" fill="#b6cb73"/>
<rect x="1092.81" y="404.20" width="11.2" height="3.70" fill="#f8d05c"/>
<rect x="1092.81" y="401.30" width="11.2" height="2.90" fill="#f6a55f"/>
<rect x="1092.81" y="395.90" width="11.2" height="5.40" fill="#fd6b6b"/>
<rect x="1109.12" y="409.90" width="11.2" height="55.40" fill="#5ba76f"/>
<rect x="1109.12" y="403.30" width="11.2" height="6.60" fill="#b6cb73"/>
<rect x="1109.12" y="402.00" width="11.2" height="1.30" fill="#f8d05c"/>
<rect x="1109.12" y="401.50" width="11.2" height="0.50" fill="#f6a55f"/>
<rect x="1109.12" y="395.10" width="11.2" height="6.40" fill="#fd6b6b"/>
<rect x="1125.42" y="449.80" width="11.2" height="15.50" fill="#5ba76f"/>
<rect x="1125.42" y="444.90" width="11.2" height="4.90" fill="#b6cb73"/>
<rect x="1125.42" y="443.20" width="11.2" height="1.70" fill="#f8d05c"/>
<rect x="1125.42" y="441.00" width="11.2" height="2.20" fill="#f6a55f"/>
<rect x="1125.42" y="440.70" width="11.2" height="0.30" fill="#fd6b6b"/>
<rect x="1141.73" y="455.50" width="11.2" height="9.80" fill="#5ba76f"/>
<rect x="1141.73" y="454.20" width="11.2" height="1.30" fill="#b6cb73"/>
<rect x="1141.73" y="454.00" width="11.2" height="0.20" fill="#f8d05c"/>
<rect x="1141.73" y="453.50" width="11.2" height="0.50" fill="#f6a55f"/>
<rect x="1141.73" y="453.00" width="11.2" height="0.50" fill="#fd6b6b"/>
<rect x="1158.03" y="433.80" width="11.2" height="31.50" fill="#5ba76f"/>
<rect x="1158.03" y="430.10" width="11.2" height="3.70" fill="#b6cb73"/>
<rect x="1158.03" y="429.50" width="11.2" height="0.60" fill="#f8d05c"/>
<rect x="1158.03" y="429.00" width="11.2" height="0.50" fill="#f6a55f"/>
<rect x="1158.03" y="419.80" width="11.2" height="9.20" fill="#fd6b6b"/>
<rect x="1158.03" y="465.30" width="11.2" height="0.70" fill="#f8d05c"/>
<rect x="1158.03" y="466.00" width="11.2" height="0.70" fill="#f6a55f"/>
<rect x="1174.34" y="446.40" width="11.2" height="18.90" fill="#5ba76f"/>
<rect x="1174.34" y="444.40" width="11.2" height="2.00" fill="#f8d05c"/>
<rect x="1174.34" y="443.50" width="11.2" height="0.90" fill="#f6a55f"/>
<rect x="1174.34" y="442.40" width="11.2" height="1.10" fill="#fd6b6b"/>
<rect x="1174.34" y="465.30" width="11.2" height="0.70" fill="#f6a55f"/>
<rect x="1190.64" y="462.90" width="11.2" height="2.40" fill="#f8d05c"/>
<rect x="1190.64" y="456.10" width="11.2" height="6.80" fill="#fd6b6b"/>
<rect x="1190.64" y="465.30" width="11.2" height="7.90" fill="#5ba76f"/>
<rect x="1190.64" y="473.20" width="11.2" height="6.40" fill="#b6cb73"/>
<rect x="1190.64" y="479.60" width="11.2" height="0.90" fill="#f6a55f"/>
<rect x="1206.95" y="370.90" width="11.2" height="94.40" fill="#5ba76f"/>
<rect x="1206.95" y="357.00" width="11.2" height="13.90" fill="#b6cb73"/>
<rect x="1206.95" y="352.30" width="11.2" height="4.70" fill="#f8d05c"/>
<rect x="1206.95" y="349.90" width="11.2" height="2.40" fill="#f6a55f"/>
<rect x="1206.95" y="333.00" width="11.2" height="16.90" fill="#fd6b6b"/>
<rect x="1223.25" y="465.30" width="11.2" height="53.40" fill="#5ba76f"/>
<rect x="1223.25" y="518.70" width="11.2" height="4.60" fill="#b6cb73"/>
<rect x="1223.25" y="523.30" width="11.2" height="1.40" fill="#f6a55f"/>
<rect x="1223.25" y="524.70" width="11.2" height="5.90" fill="#fd6b6b"/>
<rect x="1239.56" y="460.90" width="11.2" height="4.40" fill="#5ba76f"/>
<rect x="1239.56" y="458.40" width="11.2" height="2.50" fill="#b6cb73"/>
<rect x="1239.56" y="458.00" width="11.2" height="0.40" fill="#f8d05c"/>
<rect x="1239.56" y="457.50" width="11.2" height="0.50" fill="#f6a55f"/>
<rect x="1239.56" y="456.70" width="11.2" height="0.80" fill="#fd6b6b"/>
<rect x="1239.56" y="465.30" width="11.2" height="0.70" fill="#f6a55f"/>
<rect x="1255.86" y="420.50" width="11.2" height="44.80" fill="#5ba76f"/>
<rect x="1255.86" y="415.60" width="11.2" height="4.90" fill="#b6cb73"/>
<rect x="1255.86" y="412.40" width="11.2" height="3.20" fill="#f8d05c"/>
<rect x="1255.86" y="411.50" width="11.2" height="0.90" fill="#f6a55f"/>
<rect x="1255.86" y="409.90" width="11.2" height="1.60" fill="#fd6b6b"/>
<rect x="1272.16" y="451.00" width="11.2" height="14.30" fill="#5ba76f"/>
<rect x="1272.16" y="449.80" width="11.2" height="1.20" fill="#b6cb73"/>
<rect x="1272.16" y="447.60" width="11.2" height="2.20" fill="#f8d05c"/>
<rect x="1272.16" y="445.60" width="11.2" height="2.00" fill="#f6a55f"/>
<rect x="1272.16" y="443.20" width="11.2" height="2.40" fill="#fd6b6b"/>
<rect x="1288.47" y="463.00" width="11.2" height="2.30" fill="#fd6b6b"/>
<rect x="1288.47" y="465.30" width="11.2" height="2.60" fill="#5ba76f"/>
<rect x="1304.78" y="454.70" width="11.2" height="10.60" fill="#5ba76f"/>
<rect x="1304.78" y="452.30" width="11.2" height="2.40" fill="#f8d05c"/>
<rect x="1304.78" y="451.50" width="11.2" height="0.80" fill="#f6a55f"/>
<rect x="1304.78" y="448.80" width="11.2" height="2.70" fill="#fd6b6b"/>
<rect x="1321.08" y="442.70" width="11.2" height="22.60" fill="#5ba76f"/>
<rect x="1321.08" y="437.70" width="11.2" height="5.00" fill="#b6cb73"/>
<rect x="1321.08" y="437.00" width="11.2" height="0.70" fill="#f8d05c"/>
<rect x="1321.08" y="436.00" width="11.2" height="1.00" fill="#f6a55f"/>
<rect x="1321.08" y="435.00" width="11.2" height="1.00" fill="#fd6b6b"/>
<rect x="1321.08" y="465.30" width="11.2" height="1.50" fill="#f8d05c"/>
<rect x="1337.38" y="444.40" width="11.2" height="20.90" fill="#5ba76f"/>
<rect x="1337.38" y="441.90" width="11.2" height="2.50" fill="#b6cb73"/>
<rect x="1337.38" y="440.00" width="11.2" height="1.90" fill="#f8d05c"/>
<rect x="1337.38" y="439.50" width="11.2" height="0.50" fill="#f6a55f"/>
<rect x="1337.38" y="437.70" width="11.2" height="1.80" fill="#fd6b6b"/>
<rect x="1353.69" y="453.70" width="11.2" height="11.60" fill="#5ba76f"/>
<rect x="1353.69" y="451.30" width="11.2" height="2.40" fill="#b6cb73"/>
<rect x="1353.69" y="450.50" width="11.2" height="0.80" fill="#f8d05c"/>
<rect x="1353.69" y="450.00" width="11.2" height="0.50" fill="#f6a55f"/>
<rect x="1353.69" y="447.30" width="11.2" height="2.70" fill="#fd6b6b"/>
<rect x="1370.00" y="451.80" width="11.2" height="13.50" fill="#5ba76f"/>
<rect x="1370.00" y="447.60" width="11.2" height="4.20" fill="#b6cb73"/>
<rect x="1370.00" y="447.00" width="11.2" height="0.60" fill="#f8d05c"/>
<rect x="1370.00" y="446.50" width="11.2" height="0.50" fill="#f6a55f"/>
<rect x="1370.00" y="444.90" width="11.2" height="1.60" fill="#fd6b6b"/>
<rect x="1386.30" y="456.70" width="11.2" height="8.60" fill="#5ba76f"/>
<rect x="1386.30" y="453.70" width="11.2" height="3.00" fill="#f8d05c"/>
<rect x="1386.30" y="453.00" width="11.2" height="0.70" fill="#f6a55f"/>
<rect x="1386.30" y="451.80" width="11.2" height="1.20" fill="#fd6b6b"/>
<rect x="1402.61" y="446.40" width="11.2" height="18.90" fill="#5ba76f"/>
<rect x="1402.61" y="442.70" width="11.2" height="3.70" fill="#b6cb73"/>
<rect x="1402.61" y="440.70" width="11.2" height="2.00" fill="#f8d05c"/>
<rect x="1402.61" y="440.00" width="11.2" height="0.70" fill="#f6a55f"/>
<rect x="1402.61" y="438.70" width="11.2" height="1.30" fill="#fd6b6b"/>
<rect x="1418.91" y="451.80" width="11.2" height="13.50" fill="#5ba76f"/>
<rect x="1418.91" y="449.30" width="11.2" height="2.50" fill="#b6cb73"/>
<rect x="1418.91" y="448.00" width="11.2" height="1.30" fill="#f8d05c"/>
<rect x="1418.91" y="447.00" width="11.2" height="1.00" fill="#f6a55f"/>
<rect x="1418.91" y="446.80" width="11.2" height="0.20" fill="#fd6b6b"/>
<rect x="1435.22" y="448.60" width="11.2" height="16.70" fill="#5ba76f"/>
<rect x="1435.22" y="446.10" width="11.2" height="2.50" fill="#f8d05c"/>
<rect x="1435.22" y="445.50" width="11.2" height="0.60" fill="#f6a55f"/>
<rect x="1435.22" y="440.00" width="11.2" height="5.50" fill="#fd6b6b"/>
<rect x="1451.52" y="424.70" width="11.2" height="40.60" fill="#5ba76f"/>
<rect x="1451.52" y="419.00" width="11.2" height="5.70" fill="#b6cb73"/>
<rect x="1451.52" y="415.30" width="11.2" height="3.70" fill="#f8d05c"/>
<rect x="1451.52" y="413.00" width="11.2" height="2.30" fill="#f6a55f"/>
<rect x="1451.52" y="407.40" width="11.2" height="5.60" fill="#fd6b6b"/>
<rect x="1467.83" y="461.60" width="11.2" height="3.70" fill="#5ba76f"/>
<rect x="1467.83" y="459.20" width="11.2" height="2.40" fill="#f8d05c"/>
<rect x="1467.83" y="458.00" width="11.2" height="1.20" fill="#f6a55f"/>
<rect x="1467.83" y="457.20" width="11.2" height="0.80" fill="#fd6b6b"/>
<rect x="1484.13" y="450.50" width="11.2" height="14.80" fill="#5ba76f"/>
<rect x="1484.13" y="446.80" width="11.2" height="3.70" fill="#b6cb73"/>
<rect x="1484.13" y="443.90" width="11.2" height="2.90" fill="#f8d05c"/>
<rect x="1484.13" y="443.00" width="11.2" height="0.90" fill="#f6a55f"/>
<rect x="1484.13" y="440.70" width="11.2" height="2.30" fill="#fd6b6b"/>
<rect x="1500.44" y="462.40" width="11.2" height="2.90" fill="#f8d05c"/>
<rect x="1500.44" y="461.50" width="11.2" height="0.90" fill="#f6a55f"/>
<rect x="1500.44" y="458.40" width="11.2" height="3.10" fill="#fd6b6b"/>
<rect x="1500.44" y="465.30" width="11.2" height="1.50" fill="#b6cb73"/>
<rect x="1516.74" y="460.40" width="11.2" height="4.90" fill="#5ba76f"/>
<rect x="1516.74" y="458.70" width="11.2" height="1.70" fill="#f8d05c"/>
<rect x="1516.74" y="458.00" width="11.2" height="0.70" fill="#f6a55f"/>
<rect x="1516.74" y="456.70" width="11.2" height="1.30" fill="#fd6b6b"/>
<rect x="1516.74" y="465.30" width="11.2" height="1.00" fill="#b6cb73"/>
<rect x="1533.05" y="425.90" width="11.2" height="39.40" fill="#5ba76f"/>
<rect x="1533.05" y="421.70" width="11.2" height="4.20" fill="#b6cb73"/>
<rect x="1533.05" y="419.00" width="11.2" height="2.70" fill="#f8d05c"/>
<rect x="1533.05" y="418.00" width="11.2" height="1.00" fill="#f6a55f"/>
<rect x="1533.05" y="415.30" width="11.2" height="2.70" fill="#fd6b6b"/>
<line x1="88.00" y1="466" x2="88.00" y2="470" stroke="#c9ced8" stroke-width="1"/>
<line x1="185.83" y1="466" x2="185.83" y2="470" stroke="#c9ced8" stroke-width="1"/>
<line x1="283.66" y1="466" x2="283.66" y2="470" stroke="#c9ced8" stroke-width="1"/>
<line x1="381.49" y1="466" x2="381.49" y2="470" stroke="#c9ced8" stroke-width="1"/>
<line x1="479.32" y1="466" x2="479.32" y2="470" stroke="#c9ced8" stroke-width="1"/>
<line x1="577.15" y1="466" x2="577.15" y2="470" stroke="#c9ced8" stroke-width="1"/>
<line x1="674.98" y1="466" x2="674.98" y2="470" stroke="#c9ced8" stroke-width="1"/>
<line x1="772.81" y1="466" x2="772.81" y2="470" stroke="#c9ced8" stroke-width="1"/>
<line x1="870.64" y1="466" x2="870.64" y2="470" stroke="#c9ced8" stroke-width="1"/>
<line x1="968.47" y1="466" x2="968.47" y2="470" stroke="#c9ced8" stroke-width="1"/>
<line x1="1066.30" y1="466" x2="1066.30" y2="470" stroke="#c9ced8" stroke-width="1"/>
<line x1="1164.13" y1="466" x2="1164.13" y2="470" stroke="#c9ced8" stroke-width="1"/>
<line x1="1261.96" y1="466" x2="1261.96" y2="470" stroke="#c9ced8" stroke-width="1"/>
<line x1="1359.79" y1="466" x2="1359.79" y2="470" stroke="#c9ced8" stroke-width="1"/>
<line x1="1457.62" y1="466" x2="1457.62" y2="470" stroke="#c9ced8" stroke-width="1"/>
<text x="71" y="331.8" text-anchor="end" class="yl">400</text>
<text x="71" y="366.3" text-anchor="end" class="yl">300</text>
<text x="71" y="400.8" text-anchor="end" class="yl">200</text>
<text x="71" y="435.2" text-anchor="end" class="yl">100</text>
<text x="71" y="469.6" text-anchor="end" class="yl">0</text>
<text x="71" y="504.0" text-anchor="end" class="yl">-100</text>
<text x="71" y="538.5" text-anchor="end" class="yl">-200</text>
<text x="87.5" y="557.8" text-anchor="middle" class="xl">Jul 1, 2025</text>
<text x="185.3" y="557.8" text-anchor="middle" class="xl">Jul 7, 2025</text>
<text x="283.2" y="557.8" text-anchor="middle" class="xl">Jul 13, 2025</text>
<text x="381.0" y="557.8" text-anchor="middle" class="xl">Jul 19, 2025</text>
<text x="478.8" y="557.8" text-anchor="middle" class="xl">Jul 25, 2025</text>
<text x="576.6" y="557.8" text-anchor="middle" class="xl">Jul 31, 2025</text>
<text x="674.5" y="557.8" text-anchor="middle" class="xl">Aug 6, 2025</text>
<text x="772.3" y="557.8" text-anchor="middle" class="xl">Aug 12, 2025</text>
<text x="870.1" y="557.8" text-anchor="middle" class="xl">Aug 18, 2025</text>
<text x="968.0" y="557.8" text-anchor="middle" class="xl">Aug 24, 2025</text>
<text x="1065.8" y="557.8" text-anchor="middle" class="xl">Aug 30, 2025</text>
<text x="1163.6" y="557.8" text-anchor="middle" class="xl">Sep 5, 2025</text>
<text x="1261.5" y="557.8" text-anchor="middle" class="xl">Sep 11, 2025</text>
<text x="1359.3" y="557.8" text-anchor="middle" class="xl">Sep 17, 2025</text>
<text x="1456.9" y="557.8" text-anchor="middle" class="xl">Sep 23, 2025</text>
<text x="1538.6" y="557.8" text-anchor="middle" class="xl">Sep 28, 2025</text>
<circle cx="252.6" cy="535.8" r="6" fill="#fff" filter="url(#sh)"/><circle cx="252.6" cy="535.8" r="4" fill="#ef9a6b"/>
<circle cx="350.2" cy="535.8" r="6" fill="#fff" filter="url(#sh)"/><circle cx="350.2" cy="535.8" r="4" fill="#ef9a6b"/>
<circle cx="464.5" cy="535.8" r="6" fill="#fff" filter="url(#sh)"/><circle cx="464.5" cy="535.8" r="4" fill="#ef9a6b"/>
<circle cx="660.3" cy="535.8" r="6" fill="#fff" filter="url(#sh)"/><circle cx="660.3" cy="535.8" r="4" fill="#ef9a6b"/>
<circle cx="758.2" cy="535.8" r="6" fill="#fff" filter="url(#sh)"/><circle cx="758.2" cy="535.8" r="4" fill="#ef9a6b"/>
<circle cx="806.9" cy="535.8" r="6" fill="#fff" filter="url(#sh)"/><circle cx="806.9" cy="535.8" r="4" fill="#ef9a6b"/>
<circle cx="986.0" cy="535.8" r="6" fill="#fff" filter="url(#sh)"/><circle cx="986.0" cy="535.8" r="4" fill="#ef9a6b"/>
<circle cx="1117.0" cy="535.8" r="6" fill="#fff" filter="url(#sh)"/><circle cx="1117.0" cy="535.8" r="4" fill="#ef9a6b"/>
<circle cx="1279.7" cy="535.8" r="6" fill="#fff" filter="url(#sh)"/><circle cx="1279.7" cy="535.8" r="4" fill="#ef9a6b"/>
<circle cx="1442.7" cy="535.8" r="6" fill="#fff" filter="url(#sh)"/><circle cx="1442.7" cy="535.8" r="4" fill="#ef9a6b"/>
<circle cx="1491.7" cy="535.8" r="6" fill="#fff" filter="url(#sh)"/><circle cx="1491.7" cy="535.8" r="4" fill="#ef9a6b"/>
<rect x="105.0" y="567.2" width="1388.5" height="14.399999999999977" fill="#e9f0fd" stroke="#c9d8f6" stroke-width="0.8"/>
<polygon points="105.0,581.6 105.0,575.50 120.6,573.99 136.2,573.08 151.8,574.00 167.4,575.50 183.0,574.22 198.6,573.07 214.2,571.25 229.8,574.00 245.4,573.34 261.0,573.85 276.6,575.09 292.2,573.77 307.8,573.30 323.4,573.76 339.0,574.48 354.6,574.95 370.2,574.80 385.8,573.16 401.4,573.18 417.0,574.69 432.6,572.87 448.2,574.25 463.8,574.65 479.4,570.91 495.0,574.86 510.6,572.95 526.2,573.67 541.8,573.24 557.4,574.39 573.0,574.52 588.6,573.60 604.2,573.86 619.8,573.19 635.4,574.25 651.0,573.24 666.6,575.06 682.2,573.57 697.8,574.68 713.4,573.77 729.0,575.50 744.6,572.96 760.2,573.88 775.8,573.98 791.4,574.71 807.1,575.18 822.7,574.06 838.3,570.74 853.9,573.96 869.5,572.06 885.1,574.15 900.7,572.63 916.3,573.24 931.9,574.64 947.5,573.72 963.1,575.50 978.7,570.09 994.3,574.39 1009.9,574.15 1025.5,575.54 1041.1,573.83 1056.7,575.50 1072.3,572.20 1087.9,572.16 1103.5,574.33 1119.1,574.92 1134.7,573.40 1150.3,574.44 1165.9,575.79 1181.5,569.21 1197.1,578.60 1212.7,575.12 1228.3,572.87 1243.9,574.45 1259.5,575.51 1275.1,574.72 1290.7,574.13 1306.3,574.19 1321.9,574.64 1337.5,574.53 1353.1,574.86 1368.7,574.24 1384.3,574.62 1399.9,574.30 1415.5,572.75 1431.1,575.11 1446.7,574.33 1462.3,575.24 1477.9,575.14 1493.5,573.12 1493.5,581.6" fill="#d4e1fa"/>
<polyline points="105.0,575.50 120.6,573.99 136.2,573.08 151.8,574.00 167.4,575.50 183.0,574.22 198.6,573.07 214.2,571.25 229.8,574.00 245.4,573.34 261.0,573.85 276.6,575.09 292.2,573.77 307.8,573.30 323.4,573.76 339.0,574.48 354.6,574.95 370.2,574.80 385.8,573.16 401.4,573.18 417.0,574.69 432.6,572.87 448.2,574.25 463.8,574.65 479.4,570.91 495.0,574.86 510.6,572.95 526.2,573.67 541.8,573.24 557.4,574.39 573.0,574.52 588.6,573.60 604.2,573.86 619.8,573.19 635.4,574.25 651.0,573.24 666.6,575.06 682.2,573.57 697.8,574.68 713.4,573.77 729.0,575.50 744.6,572.96 760.2,573.88 775.8,573.98 791.4,574.71 807.1,575.18 822.7,574.06 838.3,570.74 853.9,573.96 869.5,572.06 885.1,574.15 900.7,572.63 916.3,573.24 931.9,574.64 947.5,573.72 963.1,575.50 978.7,570.09 994.3,574.39 1009.9,574.15 1025.5,575.54 1041.1,573.83 1056.7,575.50 1072.3,572.20 1087.9,572.16 1103.5,574.33 1119.1,574.92 1134.7,573.40 1150.3,574.44 1165.9,575.79 1181.5,569.21 1197.1,578.60 1212.7,575.12 1228.3,572.87 1243.9,574.45 1259.5,575.51 1275.1,574.72 1290.7,574.13 1306.3,574.19 1321.9,574.64 1337.5,574.53 1353.1,574.86 1368.7,574.24 1384.3,574.62 1399.9,574.30 1415.5,572.75 1431.1,575.11 1446.7,574.33 1462.3,575.24 1477.9,575.14 1493.5,573.12" fill="none" stroke="#a9c2f2" stroke-width="0.8"/>
<rect x="103.0" y="569" width="4" height="10.5" rx="1.5" fill="#fff" stroke="#a8b8d8" stroke-width="0.8"/>
<rect x="1491.5" y="569" width="4" height="10.5" rx="1.5" fill="#fff" stroke="#a8b8d8" stroke-width="0.8"/>
<text x="110.0" y="594.8" text-anchor="middle" class="sl">Jul 1, 2025</text>
<text x="202.6" y="594.8" text-anchor="middle" class="sl">Jul 7, 2025</text>
<text x="295.3" y="594.8" text-anchor="middle" class="sl">Jul 13, 2025</text>
<text x="387.9" y="594.8" text-anchor="middle" class="sl">Jul 19, 2025</text>
<text x="480.6" y="594.8" text-anchor="middle" class="sl">Jul 25, 2025</text>
<text x="573.2" y="594.8" text-anchor="middle" class="sl">Jul 31, 2025</text>
<text x="665.8" y="594.8" text-anchor="middle" class="sl">Aug 6, 2025</text>
<text x="758.5" y="594.8" text-anchor="middle" class="sl">Aug 12, 2025</text>
<text x="851.1" y="594.8" text-anchor="middle" class="sl">Aug 18, 2025</text>
<text x="943.8" y="594.8" text-anchor="middle" class="sl">Aug 24, 2025</text>
<text x="1036.4" y="594.8" text-anchor="middle" class="sl">Aug 30, 2025</text>
<text x="1129.0" y="594.8" text-anchor="middle" class="sl">Sep 5, 2025</text>
<text x="1221.7" y="594.8" text-anchor="middle" class="sl">Sep 11, 2025</text>
<text x="1314.3" y="594.8" text-anchor="middle" class="sl">Sep 17, 2025</text>
<text x="1407.0" y="594.8" text-anchor="middle" class="sl">Sep 23, 2025</text>
<circle cx="644" cy="612.4" r="4.2" fill="#5ba76f"/>
<text x="652.8" y="617.1" class="lg">5 Stars</text>
<circle cx="710.7" cy="612.4" r="4.2" fill="#b6cb73"/>
<text x="720.5" y="617.1" class="lg">4 Stars</text>
<circle cx="777.9" cy="612.4" r="4.2" fill="#f8d05c"/>
<text x="787.5" y="617.1" class="lg">3 Stars</text>
<circle cx="845.8" cy="612.4" r="4.2" fill="#f6a55f"/>
<text x="855" y="617.1" class="lg">2 Stars</text>
<circle cx="912.7" cy="612.4" r="4.2" fill="#fd6b6b"/>
<text x="922" y="617.1" class="lg">1 Star</text>
<g>
<g opacity="0.72">
<path d="M103 489 C101.5 493 100 497 100.3 501 C99 503 98.6 505 99.5 507 C102 510 106 512.5 108.5 514 L110.7 517.5 L113 514 C116 511.5 120 508.5 121.8 505.5 C122.5 503 121.8 500 121 497.5 C121 494 120 491.5 118.5 489.5 C116.5 492 114 494 111.2 495 C108.5 493.5 105.5 491.5 103 489 Z" fill="#e4ecfb" fill-opacity="0.5" stroke="#bfd2f4" stroke-width="1.3" stroke-linejoin="round"/>
<path d="M103.5 490.5 C104 495 105 498 107.5 500 L103 491 Z M118.2 491 C117.5 495 116.5 497.5 114.5 499.5 Z" fill="#c9daf6" stroke="#bfd2f4" stroke-width="1"/>
<path d="M104.5 503.5 L108 506 M114 506 L117.5 503.5" stroke="#bcd0f4" stroke-width="1.3"/>
<circle cx="111.2" cy="511.3" r="1.1" fill="#bcd0f4"/>
<text x="134.7" y="510.3" style="font-size:21px;fill:#c3d5f5;stroke:#c3d5f5;stroke-width:0.3px;letter-spacing:-0.45px;font-family:'Liberation Sans',sans-serif">FoxData</text>
</g>
</g>
</svg>
</body></html>
